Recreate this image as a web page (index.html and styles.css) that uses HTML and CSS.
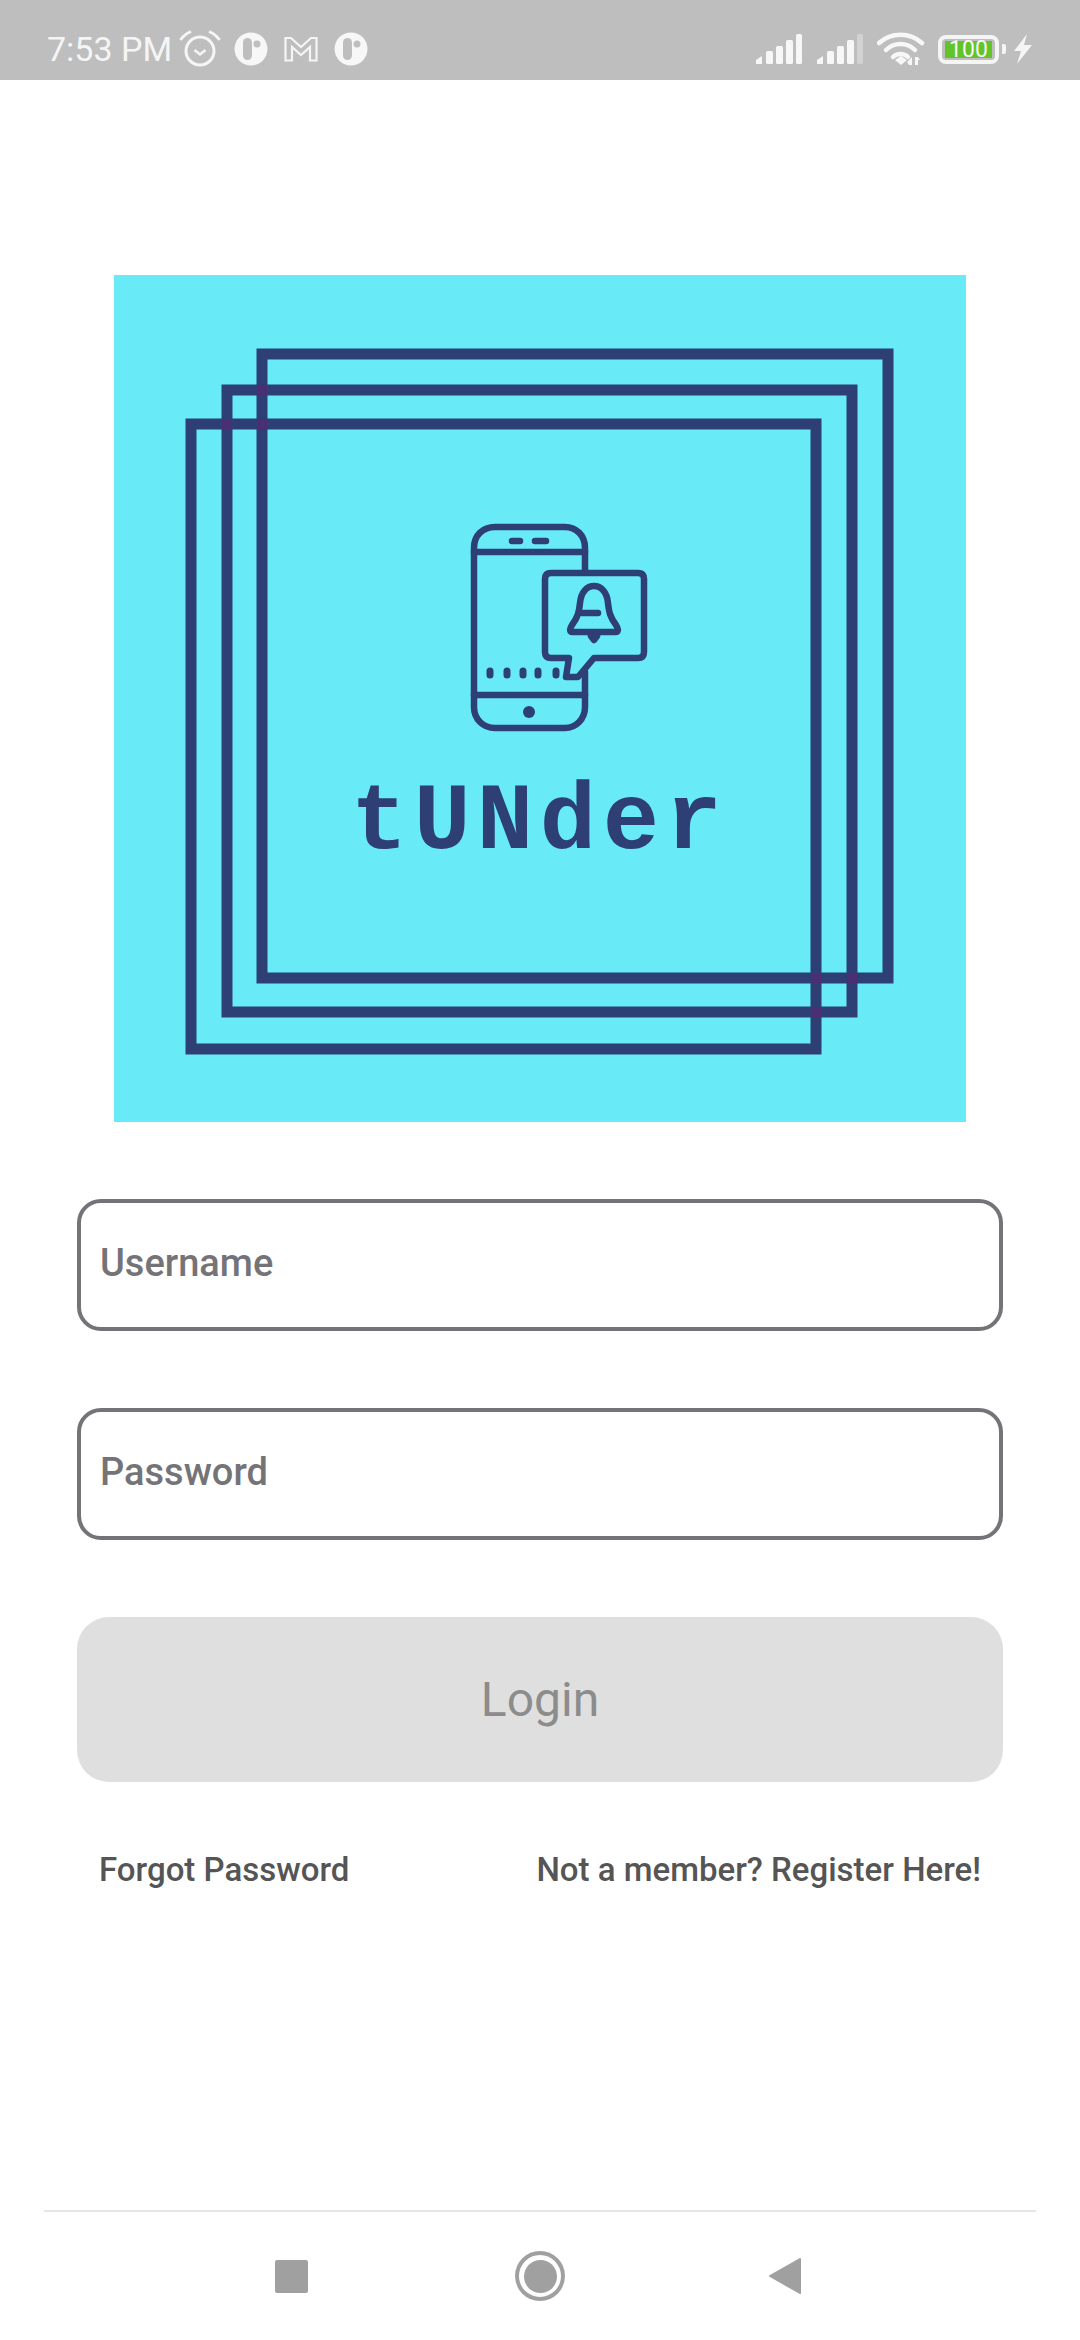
FILE: index.html
```html
<!DOCTYPE html>
<html lang="en">
<head>
  <meta charset="UTF-8">
  <title>tUNder</title>
  <link rel="stylesheet" href="styles.css">
</head>
<body>
<div class="status-bar">
  <span class="time">7:53 PM</span>
  <!--notification icons-->
  <svg class="icon-alarm" width="42" height="38" viewBox="0 0 42 38">
    <circle cx="21" cy="21" r="14" fill="none" stroke="#f5f5f5" stroke-width="3"/>
    <path d="M15.500 20l5.500 4.500 5.500-4.500" fill="none" stroke="#f5f5f5" stroke-width="2.500"/>
    <path d="M1.500 10C4 6 7.500 3.500 12 1.500M40.500 10C38 6 34.500 3.500 30 1.500" fill="none" stroke="#f5f5f5" stroke-width="3"/>
  </svg>
  <svg class="icon-round" width="34" height="34" viewBox="0 0 34 34">
    <circle cx="17" cy="17" r="16.500" fill="#f7f7f7"/>
    <rect x="9" y="6" width="9" height="22" rx="4.500" fill="#bebebe"/>
    <circle cx="23" cy="12" r="3.500" fill="#bebebe"/>
  </svg>
  <svg class="icon-mail" width="34" height="26" viewBox="0 0 34 26">
    <path d="M1.500 24.500V2H7L17 11 27 2h5.500v22.500H26V11l-9 8-9-8v13.500z" fill="none" stroke="#f5f5f5" stroke-width="2.200"/>
  </svg>
  <svg class="icon-round round-last" width="34" height="34" viewBox="0 0 34 34">
    <circle cx="17" cy="17" r="16.500" fill="#f7f7f7"/>
    <rect x="9" y="6" width="9" height="22" rx="4.500" fill="#bebebe"/>
    <circle cx="23" cy="12" r="3.500" fill="#bebebe"/>
  </svg>

  <div class="status-right">
    <svg class="signal-first" width="48" height="32" viewBox="0 0 48 32">
      <g fill="#f7f7f7">
        <path d="M1 31v-4l6-4v8z"/>
        <rect x="11" y="18" width="7" height="13" rx="1.500"/>
        <rect x="21" y="13" width="7" height="18" rx="1.500"/>
        <rect x="31" y="7" width="7" height="24" rx="1.500"/>
        <rect x="41" y="1" width="6" height="30" rx="1.500"/>
      </g>
    </svg>
    <svg width="48" height="32" viewBox="0 0 48 32">
      <g fill="#f7f7f7">
        <path d="M1 31v-4l6-4v8z"/>
        <rect x="11" y="18" width="7" height="13" rx="1.500"/>
        <rect x="21" y="13" width="7" height="18" rx="1.500"/>
        <rect x="31" y="7" width="7" height="24" rx="1.500"/>
        <rect x="41" y="1" width="6" height="30" rx="1.500" fill="#d2d2d2"/>
      </g>
    </svg>
    <svg width="48" height="34" viewBox="0 0 48 34">
      <g fill="none" stroke="#f7f7f7" stroke-width="4.500" stroke-linecap="round">
        <path d="M2 11C14 0 33 0 45 11"/>
        <path d="M9 18C17 10 30 10 38 18"/>
        <path d="M16 25C20 21 27 21 31 25"/>
      </g>
      <path d="M18 28l6-4 6 4-6 5z" fill="#f7f7f7"/>
      <path d="M35 25v8h-3l-2-3zM38 33v-8h3l2 3-2 0v5z" fill="#f7f7f7"/>
    </svg>
    <div class="battery">
      <span class="battery-level">100</span>
    </div>
    <span class="battery-tip"></span>
    <svg class="icon-bolt" width="20" height="30" viewBox="0 0 20 30">
      <path d="M14 0L1 17h7L4 30 19 11h-8z" fill="#f5f5f5"/>
    </svg>
  </div>
</div>

<div class="content">
  <!--logo, coordinates follow the page so the box is offset in the viewBox-->
  <svg class="logo" width="852" height="847" viewBox="114 275 852 847">
    <rect x="114" y="275" width="852" height="847" fill="#69eaf7"/>
    <g class="logo-art">
      <g fill="none" stroke="#2d3f75" stroke-width="11">
        <rect x="262" y="354" width="626" height="624"/>
        <rect x="227" y="390" width="625" height="622"/>
        <rect x="191" y="424" width="625" height="625"/>
      </g>
      <!--line crossings are a bit more purple-->
      <g fill="#4a2f74">
        <rect x="257" y="385" width="10" height="10"/>
        <rect x="257" y="419" width="10" height="10"/>
        <rect x="222" y="419" width="10" height="10"/>
        <rect x="811" y="973" width="10" height="10"/>
        <rect x="811" y="1007" width="10" height="10"/>
        <rect x="847" y="973" width="10" height="10"/>
      </g>
      <g fill="none" stroke="#2d3f75" stroke-width="6.500" stroke-linecap="round" stroke-linejoin="round">
        <path d="M585 571V548C585 535 576 527 565 527H495C483 527 474 535 474 548V707C474 719 483 728 495 728H565C576 728 585 719 585 707V672"/>
        <path d="M474 552H585M474 695H585"/>
        <path d="M512 541H520M535 541H546"/>
        <path d="M551 573H638C642 573 644 575 644 579V652C644 656 642 658 638 658H594L578 677H566L569 658H551C547 658 545 656 545 652V579C545 575 547 573 551 573Z"/>
        <path d="M572 632H616C619 632 618 628 616 625C610 617 609 612 608 603C607 592 601 586 594 586C587 586 581 592 580 603C579 612 578 617 572 625C570 628 569 632 572 632Z"/>
        <path d="M582 613H598"/>
        <path d="M591 636L594 640L597 636"/>
        <path d="M490 671V675M507 671V675M523 671V675M538 671V675M556 671V675" stroke-width="7"/>
      </g>
      <circle cx="529" cy="712" r="6" fill="#2d3f75"/>
      <text class="logo-text" x="351" y="848">tUNder</text>
    </g>
  </svg>

  <form class="login-form">
    <div class="field">Username</div>
    <div class="field">Password</div>
    <div class="login-btn">Login</div>
    <div class="links">
      <span>Forgot Password</span>
      <span>Not a member? Register Here!</span>
    </div>
  </form>
</div>

<div class="nav-bar">
  <span class="nav-square"></span>
  <span class="nav-home"><span></span></span>
  <svg class="nav-back" width="34" height="38" viewBox="0 0 34 38">
    <path d="M32 2L2 19 32 36z" fill="#a0a0a0" stroke="#a0a0a0" stroke-width="2" stroke-linejoin="round"/>
  </svg>
</div>
</body>
</html>
```

FILE: styles.css
```css
* {
  padding: 0;
  margin: 0;
  box-sizing: border-box;
}

body {
  width: 1080px;
  height: 2340px;
  background: #fff;
  font-family: Roboto, "Liberation Sans", sans-serif;
  display: flex;
  flex-direction: column;
}

.status-bar {
  height: 80px;
  background: #bebebe;
  display: flex;
  align-items: center;
  padding: 18px 47px 0;
  color: #f5f5f5;
}

.time {
  font-size: 34px;
  width: 132px;
  flex: none;
}

.icon-round {
  margin-left: 13px;
}

.round-last {
  margin-left: 16px;
}

.icon-mail {
  margin-left: 16px;
}

.status-right {
  margin-left: auto;
  display: flex;
  align-items: center;
}

.status-right svg {
  margin-left: 13px;
}

.status-right .signal-first {
  margin-left: 0;
}

.status-right .icon-bolt {
  margin-left: 7px;
}

.battery {
  width: 61px;
  height: 29px;
  margin-left: 13px;
  border: 4px solid #f5f5f5;
  border-radius: 8px;
  padding: 2px 3px;
  display: flex;
}

.battery-level {
  flex: 1;
  background: #63c427;
  color: #f5f5f5;
  font-size: 23px;
  line-height: 17px;
  text-align: center;
}

.battery-tip {
  width: 4px;
  height: 10px;
  margin-left: 3px;
  background: #f5f5f5;
  border-radius: 0 2px 2px 0;
}

.content {
  flex: 1;
  display: flex;
  flex-direction: column;
  align-items: center;
  padding-top: 195px;
}

.logo {
  display: block;
}

.logo-art {
  filter: blur(0.7px);
}

.logo-text {
  font-family: "Liberation Mono", monospace;
  font-weight: bold;
  font-size: 94px;
  letter-spacing: 6.500px;
  fill: #2d3f75;
}

.login-form {
  width: 926px;
  margin-top: 77px;
}

.field {
  height: 132px;
  border: 4px solid #747478;
  border-radius: 24px;
  margin-bottom: 77px;
  padding-left: 19px;
  font-size: 38px;
  font-weight: 500;
  line-height: 120px;
  color: #747478;
}

.login-btn {
  height: 165px;
  border-radius: 32px;
  background: #dfdfdf;
  color: #8c8c8c;
  font-size: 48px;
  line-height: 165px;
  text-align: center;
}

.links {
  display: flex;
  justify-content: space-between;
  padding: 0 22px;
  margin-top: 68px;
  font-size: 33px;
  font-weight: 500;
  color: #555;
}

.nav-bar {
  height: 130px;
  margin: 0 44px;
  border-top: 2px solid #e6e6e6;
  display: flex;
  align-items: center;
  padding-left: 231px;
}

.nav-square {
  width: 33px;
  height: 33px;
  background: #a0a0a0;
  border-radius: 2px;
}

.nav-home {
  width: 50px;
  height: 50px;
  margin-left: 207px;
  border: 4px solid #a0a0a0;
  border-radius: 50%;
  padding: 4.5px;
}

.nav-home span {
  display: block;
  width: 33px;
  height: 33px;
  background: #a0a0a0;
  border-radius: 50%;
}

.nav-back {
  margin-left: 203px;
}
```
